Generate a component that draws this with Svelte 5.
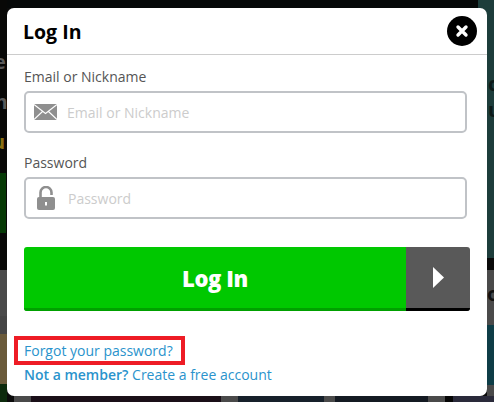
<script>
  const bgBlocks = [
    { x: 0, y: 0, w: 478, h: 8, c: '#060808' },
    { x: 478, y: 0, w: 16, h: 258, c: '#1d3d3b' },
    { x: 487, y: 258, w: 7, h: 12, c: '#0a0a0a' },
    { x: 487, y: 270, w: 7, h: 126, c: '#4a4a4a' },
    { x: 487, y: 325, w: 7, h: 60, c: '#0e3d47' },
    { x: 0, y: 0, w: 7, h: 402, c: '#080807' },
    { x: 0, y: 173, w: 6, h: 60, c: '#063a06' },
    { x: 0, y: 270, w: 7, h: 46, c: '#4a4a4a' },
    { x: 0, y: 316, w: 7, h: 18, c: '#454545' },
    { x: 0, y: 334, w: 7, h: 50, c: '#6a5a3a' },
    { x: 0, y: 384, w: 7, h: 18, c: '#0c2a0c' },
    { x: 14, y: 396, w: 17, h: 6, c: '#4a4a4a' },
    { x: 31, y: 396, w: 190, h: 6, c: '#1a0f18' },
    { x: 221, y: 396, w: 17, h: 6, c: '#4a4a4a' },
    { x: 238, y: 396, w: 86, h: 6, c: '#16202a' },
    { x: 324, y: 396, w: 11, h: 6, c: '#4a4a4a' },
    { x: 335, y: 396, w: 93, h: 6, c: '#141a22' },
    { x: 428, y: 396, w: 17, h: 6, c: '#4a4a4a' },
    { x: 445, y: 396, w: 8, h: 6, c: '#050505' },
    { x: 453, y: 396, w: 41, h: 6, c: '#2a2a3a' }
  ];
  const bgText = [
    { t: 'e', x: -6, y: 50, c: '#5a5a5a' },
    { t: 'm', x: -12, y: 90, c: '#5a5a5a' },
    { t: 'u', x: -8, y: 130, c: '#8a6f10' },
    { t: 'c', x: 488, y: 72, c: '#0c1a19' },
    { t: 'u', x: 488, y: 98, c: '#0c1a19' },
    { t: 'oc', x: 487, y: 282, c: '#111' }
  ];
</script>

<div class="page">
  {#each bgBlocks as b}
    <div class="block" style="left:{b.x}px;top:{b.y}px;width:{b.w}px;height:{b.h}px;background:{b.c}"></div>
  {/each}
  {#each bgText as b}
    <div class="bgtext" style="left:{b.x}px;top:{b.y}px;color:{b.c}">{b.t}</div>
  {/each}

  <div class="modal">
    <header>
      <h1>Log In</h1>
      <button class="close" aria-label="Close">
        <svg width="14" height="14" viewBox="0 0 14 14"><path d="M3 3l8 8M11 3l-8 8" stroke="#fff" stroke-width="3.4" stroke-linecap="round"/></svg>
      </button>
    </header>

    <form>
      <label for="email">Email or Nickname</label>
      <div class="field">
        <svg class="ico" width="23" height="16" viewBox="0 0 23 16">
          <rect width="23" height="16" fill="#8f8f8f"/>
          <path d="M0 0.5L11.5 9.5L23 0.5M0 15.5L8.5 7.5M23 15.5L14.5 7.5" fill="none" stroke="#fff" stroke-width="1.1"/>
        </svg>
        <input id="email" placeholder="Email or Nickname" />
      </div>

      <label for="pw" class="second">Password</label>
      <div class="field">
        <svg class="ico lock" width="18" height="24" viewBox="0 0 18 24">
          <path d="M3.5 11V6.5a5.5 5.5 0 0 1 11 0V9" fill="none" stroke="#8f8f8f" stroke-width="2.6"/>
          <rect x="0" y="11" width="18" height="13" rx="2" fill="#8f8f8f"/>
          <rect x="8" y="16" width="2" height="3.5" fill="#fff"/>
        </svg>
        <input id="pw" placeholder="Password" />
      </div>

      <button type="button" class="submit">
        <span class="main">Log In</span>
        <span class="arrow">
          <svg width="11" height="21" viewBox="0 0 11 21"><path d="M0 0L11 10.5L0 21z" fill="#fff"/></svg>
        </span>
      </button>

      <div class="links">
        <a class="forgot" href="#forgot">Forgot your password?</a>
        <div class="member"><b>Not a member?</b> Create a free account</div>
      </div>
    </form>
  </div>
</div>

<style>
  :global(body) { margin: 0; background: #000; }
  .page { position: relative; width: 494px; height: 402px; overflow: hidden; background: #0b0b0b; font-family: "Open Sans", sans-serif; }
  .block { position: absolute; }
  .bgtext { position: absolute; font-size: 20px; font-weight: 700; line-height: 24px; }
  .modal { position: absolute; left: 7px; top: 8px; width: 480px; height: 388px; background: #fff; border-radius: 7px; }
  header { height: 46px; border-bottom: 1px solid #ccc; display: flex; align-items: center; justify-content: space-between; padding: 0 10px 0 16px; }
  h1 { margin: 0; font-size: 19.5px; font-weight: 700; color: #000; }
  .close { width: 30px; height: 30px; border-radius: 50%; background: #000; border: 0; padding: 0; display: flex; align-items: center; justify-content: center; }
  form { padding: 12px 17px 0; }
  label { display: block; font-size: 14px; line-height: 20px; color: #555; margin-bottom: 4px; }
  .second { margin-top: 20px; }
  .field { width: 443px; height: 42px; box-sizing: border-box; border: 2px solid #c0c3c7; border-radius: 5px; display: flex; align-items: center; }
  .ico { margin-left: 8px; flex: none; }
  .lock { margin-left: 11px; margin-right: 3px; }
  input { border: 0; outline: 0; flex: 1; min-width: 0; margin-left: 8px; font: 14px "Open Sans", sans-serif; color: #555; background: transparent; }
  input::placeholder { color: #ccc; opacity: 1; }
  .submit { margin-top: 28px; width: 446px; height: 64px; padding: 0; border: 0; border-radius: 3px; overflow: hidden; display: flex; background: none; font-family: inherit; }
  .main { flex: 1; background: #00c800; border-bottom: 3px solid #00a000; color: #fff; font-size: 22px; font-weight: 800; letter-spacing: -0.4px; display: flex; align-items: center; justify-content: center; }
  .arrow { width: 64px; background: #595959; border-bottom: 3px solid #000; display: flex; align-items: center; justify-content: center; }
  .links { margin-top: 25px; font-size: 14px; color: #2a93cc; }
  .forgot { display: block; width: max-content; color: #2a93cc; text-decoration: none; line-height: 21px; border: 4px solid #ee1c25; padding: 0 8px 0 6px; margin-left: -10px; }
  .member { line-height: 20px; }
  .member b { font-weight: 600; }
</style>
